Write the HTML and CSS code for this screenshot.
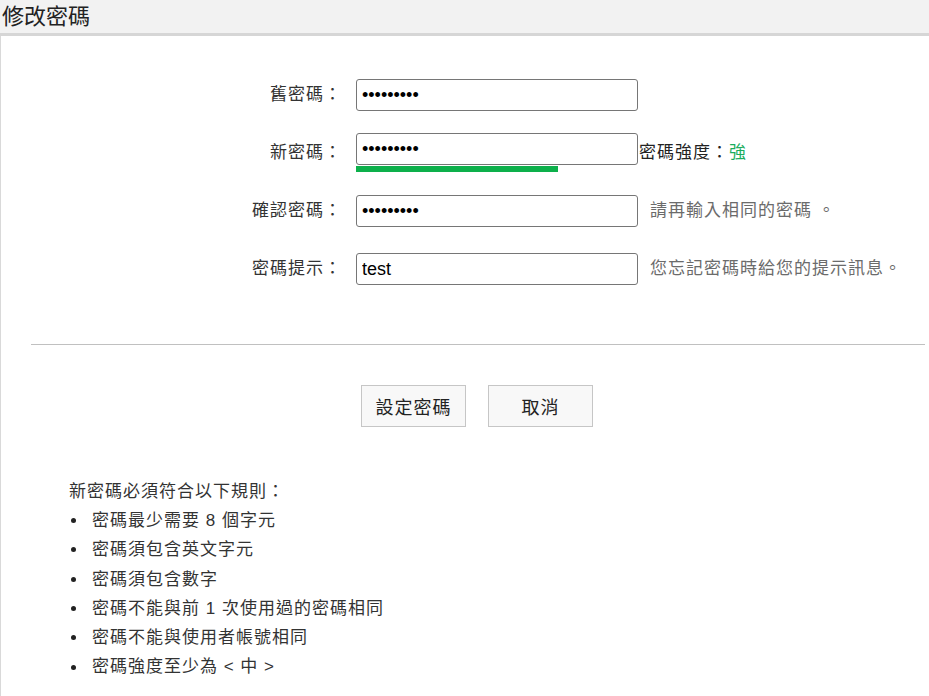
FILE: index.html
```html
<!DOCTYPE html>
<html lang="zh-Hant">

<head>
	<meta charset="utf-8">
	<title>修改密碼</title>
	<link rel="stylesheet" href="styles.css">
</head>

<body>
	<div class="header">
		<h1>修改密碼</h1>
	</div>

	<div class="content">
		<form class="password-form">
			<div class="row row-old">
				<label for="old-password">舊密碼：</label>
				<div class="field">
					<input type="password" id="old-password" value="123456789">
				</div>
			</div>
			<div class="row row-new">
				<label for="new-password">新密碼：</label>
				<div class="field">
					<input type="password" id="new-password" value="123456789">
					<div class="strength-bar"></div>
				</div>
				<span class="strength">密碼強度：<span class="strong">強</span></span>
			</div>
			<div class="row row-confirm">
				<label for="confirm-password">確認密碼：</label>
				<div class="field">
					<input type="password" id="confirm-password" value="123456789">
				</div>
				<span class="note">請再輸入相同的密碼 。</span>
			</div>
			<div class="row row-hint">
				<label for="hint">密碼提示：</label>
				<div class="field">
					<input type="text" id="hint" value="test">
				</div>
				<span class="note">您忘記密碼時給您的提示訊息。</span>
			</div>
		</form>

		<div class="actions">
			<hr>
			<div class="buttons">
				<button type="button">設定密碼</button>
				<button type="button">取消</button>
			</div>
		</div>

		<div class="rules">
			<p>新密碼必須符合以下規則：</p>
			<ul>
				<li>密碼最少需要 8 個字元</li>
				<li>密碼須包含英文字元</li>
				<li>密碼須包含數字</li>
				<li>密碼不能與前 1 次使用過的密碼相同</li>
				<li>密碼不能與使用者帳號相同</li>
				<li>密碼強度至少為 &lt; 中 &gt;</li>
			</ul>
		</div>
	</div>
</body>

</html>
```

FILE: styles.css
```css
body {
	margin: 0;
	font-family: "Liberation Sans", "Noto Sans CJK TC", sans-serif;
	color: #333;
	background-color: #fff;
}

.header {
	background-color: #f2f2f2;
	height: 33px;
	border-bottom: 3px solid #d6d6d6;
}

h1 {
	margin: 0;
	padding-left: 2px;
	font-size: 22px;
	font-weight: normal;
	line-height: 33px;
	color: #222;
}

.content {
	border-left: 1px solid #d9d9d9;
	min-height: 660px;
}

.password-form {
	padding-top: 43px;
}

.row {
	display: flex;
	align-items: flex-start;
	margin-bottom: 22px;
	letter-spacing: 1px;
}

.row-new {
	margin-bottom: 23px;
}

.row-confirm {
	margin-bottom: 26px;
}

.row label {
	width: 341px;
	text-align: right;
	font-size: 17px;
	line-height: 32px;
	color: #333;
}

.row-new label {
	line-height: 39px;
}

.field {
	margin-left: 14px;
	width: 282px;
}

input {
	box-sizing: border-box;
	width: 282px;
	height: 32px;
	padding: 0 5px;
	border: 1px solid #767676;
	border-radius: 3px;
	font-family: "Liberation Sans", sans-serif;
	font-size: 18px;
	letter-spacing: 0;
	color: #000;
	background-color: #fff;
}

.strength-bar {
	width: 202px;
	height: 6px;
	margin-top: 1px;
	background-color: #0db04b;
}

.strength {
	margin-left: 1px;
	font-size: 17px;
	line-height: 39px;
	color: #222;
}

.strong {
	color: #1aad5d;
}

.note {
	margin-left: 12px;
	font-size: 17px;
	line-height: 32px;
	color: #6b6b6b;
}

.actions {
	margin: 0 4px 0 30px;
	padding-top: 37px;
}

hr {
	margin: 0;
	border: 0;
	border-top: 1px solid #c0c0c0;
}

.buttons {
	display: flex;
	justify-content: center;
	gap: 22px;
	padding: 40px 2px 0 0;
}

button {
	width: 105px;
	height: 42px;
	border: 1px solid #c6c6c6;
	background-color: #f8f8f8;
	font-family: "Liberation Sans", "Noto Sans CJK TC", sans-serif;
	font-size: 18px;
	letter-spacing: 1px;
	color: #222;
}

.rules {
	padding: 50px 0 0 68px;
	font-size: 17px;
	letter-spacing: 1px;
	color: #333;
}

.rules p {
	margin: 0;
	line-height: 29px;
}

.rules ul {
	margin: 0;
	padding: 0;
	list-style: none;
}

.rules li {
	display: flex;
	align-items: center;
	line-height: 29.3px;
}

.rules li::before {
	content: "";
	width: 5px;
	height: 5px;
	margin: 0 16px 0 2px;
	border-radius: 50%;
	background-color: #222;
}
```
